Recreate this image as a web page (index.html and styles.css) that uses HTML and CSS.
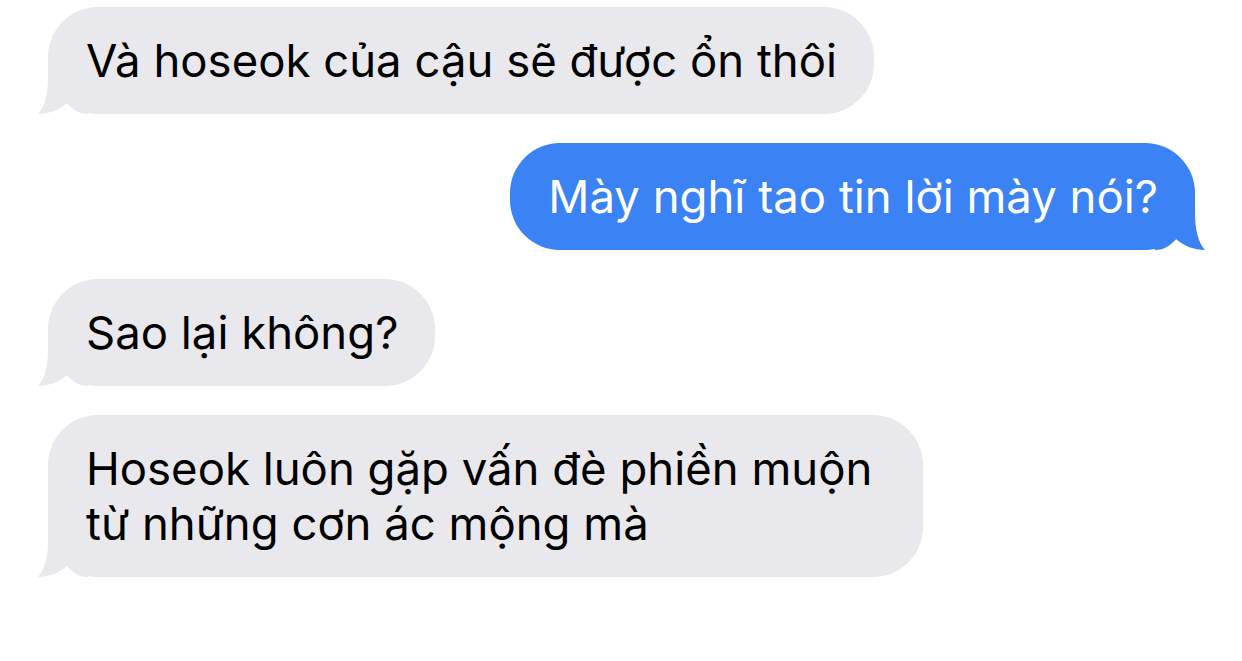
FILE: index.html
```html
<!DOCTYPE html>
<html lang="vi">
<head>
    <meta charset="UTF-8">
    <meta name="viewport" content="width=device-width, initial-scale=1.0">
    <title>Tin nhắn</title>
    <link rel="stylesheet" href="styles.css">
</head>
<body>
    <div class="chat">
        <div class="bubble in">
            Và hoseok của cậu sẽ được ổn thôi
            <svg class="tail" viewBox="0 0 50 50"><path d="M10 0 L10 12 C10 30 7 42 0 50 C11 50 21 46 29 39 C34 45 40 50 50 50 L50 0 Z"/></svg>
        </div>
        <div class="bubble out">
            Mày nghĩ tao tin lời mày nói?
            <svg class="tail" viewBox="0 0 50 50"><path d="M40 0 L40 12 C40 30 43 42 50 50 C39 50 29 46 21 39 C16 45 10 50 0 50 L0 0 Z"/></svg>
        </div>
        <div class="bubble in">
            Sao lại không?
            <svg class="tail" viewBox="0 0 50 50"><path d="M10 0 L10 12 C10 30 7 42 0 50 C11 50 21 46 29 39 C34 45 40 50 50 50 L50 0 Z"/></svg>
        </div>
        <div class="bubble in">
            Hoseok luôn gặp vấn đè phiền muộn từ những cơn ác mộng mà
            <svg class="tail" viewBox="0 0 50 50"><path d="M10 0 L10 12 C10 30 7 42 0 50 C11 50 21 46 29 39 C34 45 40 50 50 50 L50 0 Z"/></svg>
        </div>
    </div>
</body>
</html>
```

FILE: styles.css
```css
body {
    margin: 0;
    background-color: #fff;
    font-family: Inter, "Noto Sans", sans-serif;
}
.chat {
    display: flex;
    flex-direction: column;
    gap: 29px;
    padding: 7px 47px 0 48px;
}
.bubble {
    position: relative;
    max-width: 875px;
    box-sizing: border-box;
    padding: 26px 37px 26px 38px;
    font-size: 45.5px;
    line-height: 55px;
    border-radius: 50px;
    color: #000;
}
.bubble .tail {
    position: absolute;
    bottom: 0;
    width: 50px;
    height: 50px;
}
.in {
    align-self: flex-start;
    background-color: #e9e9ed;
}
.in .tail {
    left: -10px;
    fill: #e9e9ed;
}
.out {
    align-self: flex-end;
    background-color: #3b82f5;
    color: #fff;
}
.out .tail {
    right: -10px;
    fill: #3b82f5;
}
```
